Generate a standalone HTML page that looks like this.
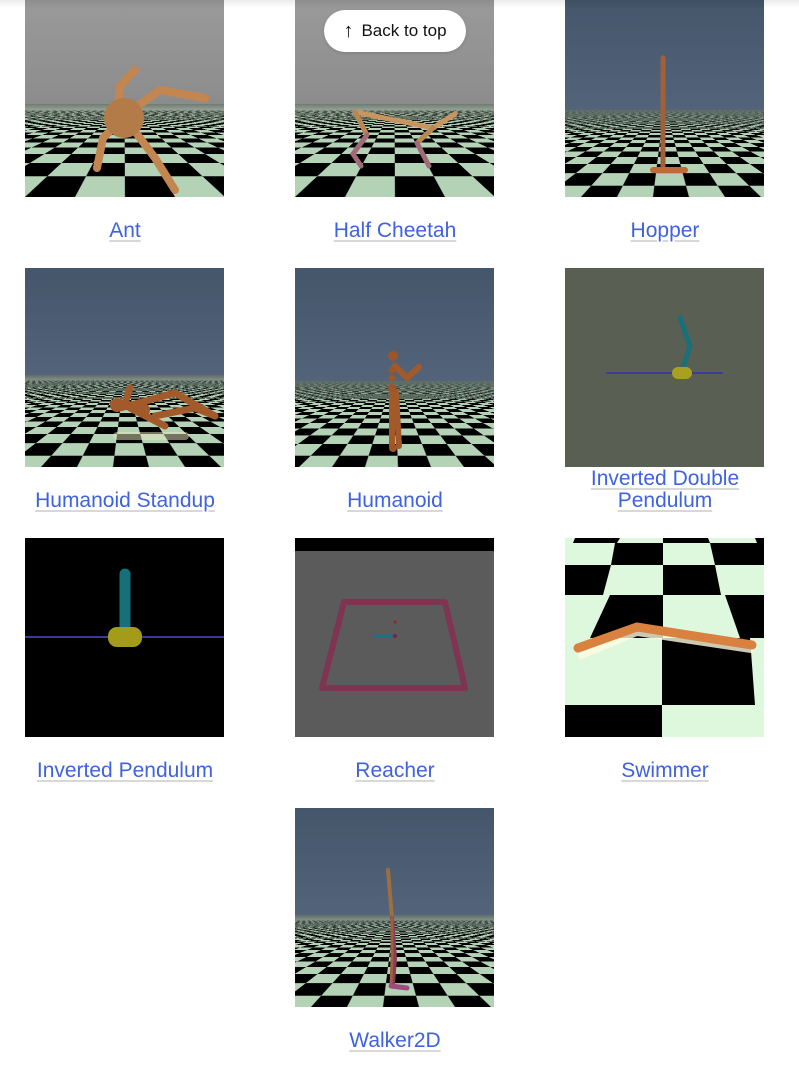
<!DOCTYPE html>
<html><head><meta charset="utf-8">
<style>
html,body{margin:0;padding:0;background:#fff;width:799px;height:1069px;overflow:hidden;position:relative;font-family:"Liberation Sans",sans-serif}
.sc{position:absolute;width:199px;height:199px;overflow:hidden}
.sky{position:absolute;left:0;top:0;width:199px}
.floor{position:absolute;left:0;width:199px;overflow:hidden;perspective:150px}
.plane{position:absolute;left:-2900px;width:6000px;height:2400px;bottom:0;transform-origin:50% 100%;transform:rotateX(60deg)}
.fog{position:absolute;left:0;width:199px}
.sc svg{position:absolute;left:0;top:0}
.lab{position:absolute;width:270px;height:44px;display:flex;align-items:center;justify-content:center;text-align:center;font-size:21px;line-height:22px;color:#3e62e0}
.lab span{text-decoration:underline;text-decoration-color:#d8d8d8;text-decoration-thickness:2px;text-underline-offset:3px}
.btt{position:absolute;left:324px;top:10px;width:142px;height:42px;border-radius:21px;background:#fff;font-size:17px;color:#111;display:flex;align-items:center;justify-content:center;box-shadow:0 1px 3px rgba(0,0,0,.15)}
</style></head><body>

<!-- Ant -->
<div class="sc" style="left:25px;top:-2px">
 <div class="sky" style="height:106px;background:linear-gradient(#9a9a9a,#8c8c8c)"></div>
 <div class="floor" style="top:106px;height:93px;perspective-origin:50% 87px"><div class="plane" style="background:repeating-conic-gradient(#000 0 25%,#b4d2b6 0 50%) 0 0/100px 100px"></div></div>
 <div class="fog" style="top:106px;height:22px;background:linear-gradient(#6f7d70,rgba(111,125,112,0))"></div>
 <svg width="199" height="199" stroke-linecap="round" fill="none">
  <g stroke="#c38650" stroke-width="8">
   <path d="M93 108 L95 88 L110 72"/><path d="M107 112 L135 92 L180 100"/>
   <path d="M90 128 L78 140 L72 170"/><path d="M112 136 L130 160 L150 192"/>
  </g>
  <circle cx="99" cy="120" r="20" fill="#b27b47"/>
 </svg>
</div>
<div class="lab" style="left:-10px;top:209px"><span>Ant</span></div>

<!-- Half Cheetah -->
<div class="sc" style="left:295px;top:-2px">
 <div class="sky" style="height:106px;background:linear-gradient(#9a9a9a,#8c8c8c)"></div>
 <div class="floor" style="top:106px;height:93px;perspective-origin:50% 87px"><div class="plane" style="background:repeating-conic-gradient(#000 0 25%,#b4d2b6 0 50%) 0 0/100px 100px"></div></div>
 <div class="fog" style="top:106px;height:22px;background:linear-gradient(#6f7d70,rgba(111,125,112,0))"></div>
 <svg width="199" height="199" stroke-linecap="round" fill="none">
  <path d="M60 114 L138 130 L160 116" stroke="#c9955f" stroke-width="5"/>
  <path d="M60 114 L72 137" stroke="#b98752" stroke-width="5"/>
  <path d="M72 137 L58 156 L66 168" stroke="#a06a78" stroke-width="5"/>
  <path d="M138 130 L122 145" stroke="#b98752" stroke-width="5"/>
  <path d="M122 145 L134 168" stroke="#a06a78" stroke-width="5"/>
 </svg>
</div>
<div class="lab" style="left:260px;top:209px"><span>Half Cheetah</span></div>

<!-- Hopper -->
<div class="sc" style="left:565px;top:-2px">
 <div class="sky" style="height:112px;background:linear-gradient(#45566b,#53637a)"></div>
 <div class="floor" style="top:112px;height:87px;perspective-origin:50% 81px"><div class="plane" style="background:repeating-conic-gradient(#000 0 25%,#b4d2b6 0 50%) 0 0/72px 72px"></div></div>
 <div class="fog" style="top:112px;height:22px;background:linear-gradient(#5e6e66,rgba(94,110,102,0))"></div>
 <svg width="199" height="199" stroke-linecap="round" fill="none">
  <path d="M98 60 L98 168" stroke="#a2603a" stroke-width="5"/>
  <path d="M88 172 L120 172" stroke="#c06a38" stroke-width="6"/>
 </svg>
</div>
<div class="lab" style="left:530px;top:209px"><span>Hopper</span></div>

<!-- Humanoid Standup -->
<div class="sc" style="left:25px;top:268px">
 <div class="sky" style="height:107px;background:linear-gradient(#45566b,#53637a)"></div>
 <div class="floor" style="top:107px;height:92px;perspective-origin:50% 86px"><div class="plane" style="background:repeating-conic-gradient(#000 0 25%,#b4d2b6 0 50%) 0 0/72px 72px"></div></div>
 <div class="fog" style="top:107px;height:22px;background:linear-gradient(#5e6e66,rgba(94,110,102,0))"></div>
 <svg width="199" height="199" stroke-linecap="round" fill="none">
  <g stroke="#a35a2a" stroke-width="7">
   <path d="M95 140 L150 125 L190 148"/><path d="M130 148 L170 140 L190 148"/>
   <path d="M105 140 L140 158"/><path d="M100 135 L105 120"/>
  </g>
  <circle cx="92" cy="137" r="7" fill="#a35a2a"/><circle cx="118" cy="142" r="7" fill="#a35a2a"/>
  <path d="M92 168 L160 168" stroke="#e8e6c0" stroke-width="8" opacity=".5"/>
 </svg>
</div>
<div class="lab" style="left:-10px;top:479px"><span>Humanoid Standup</span></div>

<!-- Humanoid -->
<div class="sc" style="left:295px;top:268px">
 <div class="sky" style="height:113px;background:linear-gradient(#45566b,#53637a)"></div>
 <div class="floor" style="top:113px;height:86px;perspective-origin:50% 80px"><div class="plane" style="background:repeating-conic-gradient(#000 0 25%,#b4d2b6 0 50%) 0 0/66px 66px"></div></div>
 <div class="fog" style="top:113px;height:22px;background:linear-gradient(#5e6e66,rgba(94,110,102,0))"></div>
 <svg width="199" height="199" stroke-linecap="round" fill="none">
  <g stroke="#a35a2a" stroke-width="6">
   <path d="M97 122 L97 178"/><path d="M101 124 L104 178"/>
   <path d="M100 98 L112 110 L124 99"/>
  </g>
  <g fill="#9e5628"><circle cx="98" cy="88" r="5"/><circle cx="97" cy="102" r="3.5"/><circle cx="97" cy="110" r="3.5"/><circle cx="97" cy="120" r="4"/><circle cx="98" cy="180" r="4"/></g>
 </svg>
</div>
<div class="lab" style="left:260px;top:479px"><span>Humanoid</span></div>

<!-- Inverted Double Pendulum -->
<div class="sc" style="left:565px;top:268px;background:#595f53">
 <svg width="199" height="199" stroke-linecap="round" fill="none">
  <path d="M42 105 L157 105" stroke="#3e3aa0" stroke-width="2"/>
  <path d="M117 103 L125 78 L115 50" stroke="#17707a" stroke-width="5"/>
  <rect x="107" y="99" width="20" height="12" rx="6" fill="#a8a020"/>
 </svg>
</div>
<div class="lab" style="left:530px;top:468px"><span>Inverted Double<br>Pendulum</span></div>

<!-- Inverted Pendulum -->
<div class="sc" style="left:25px;top:538px;background:#000">
 <svg width="199" height="199" stroke-linecap="round" fill="none">
  <path d="M0 99 L199 99" stroke="#3a3a9a" stroke-width="2"/>
  <path d="M100 92 L100 36" stroke="#16707a" stroke-width="11"/>
  <rect x="83" y="89" width="34" height="20" rx="9" fill="#a49c18"/>
 </svg>
</div>
<div class="lab" style="left:-10px;top:749px"><span>Inverted Pendulum</span></div>

<!-- Reacher -->
<div class="sc" style="left:295px;top:538px;background:#5b5b5b">
 <div style="position:absolute;left:0;top:0;width:199px;height:13px;background:#000"></div>
 <svg width="199" height="199" stroke-linecap="round" stroke-linejoin="round" fill="none">
  <path d="M49 64 L150 64 L170 150 L27 150 Z" stroke="#7f3452" stroke-width="6"/>
  <path d="M80 98 L100 98" stroke="#1d6f88" stroke-width="3"/>
  <circle cx="100" cy="98" r="2.2" fill="#7a2840"/>
  <circle cx="100" cy="84" r="1.6" fill="#8a2a2a"/>
 </svg>
</div>
<div class="lab" style="left:260px;top:749px"><span>Reacher</span></div>

<!-- Swimmer -->
<div class="sc" style="left:565px;top:538px;background:#def8de">
 <svg width="199" height="199" stroke-linecap="round" fill="none">
  <g fill="#000">
   <polygon points="10,0 55,0 52,5 8,5"/><polygon points="98,0 143,0 145,5 98,5"/><polygon points="190,0 199,0 199,5 192,5"/>
   <polygon points="50,5 98,5 98,27 46,27"/><polygon points="145,5 199,5 199,27 150,27"/>
   <polygon points="0,27 46,27 38,57 0,57"/><polygon points="98,27 150,27 156,57 98,57"/>
   <polygon points="45,57 98,57 98,100 25,100"/><polygon points="160,57 199,57 199,100 175,100"/>
   <polygon points="97,100 185,100 190,167 97,167"/>
   <polygon points="0,167 97,167 97,199 0,199"/>
  </g>
  <path d="M16 118 L72 95 L186 112" stroke="#fffbe0" stroke-width="6" opacity=".8"/>
  <path d="M13 110 L72 89 L187 107" stroke="#d9823f" stroke-width="9"/>
 </svg>
</div>
<div class="lab" style="left:530px;top:749px"><span>Swimmer</span></div>

<!-- Walker2D -->
<div class="sc" style="left:295px;top:808px">
 <div class="sky" style="height:107px;background:linear-gradient(#45566b,#53637a)"></div>
 <div class="floor" style="top:107px;height:92px;perspective-origin:50% 86px"><div class="plane" style="background:repeating-conic-gradient(#000 0 25%,#b4d2b6 0 50%) 0 0/72px 72px"></div></div>
 <div class="fog" style="top:107px;height:22px;background:linear-gradient(#5e6e66,rgba(94,110,102,0))"></div>
 <svg width="199" height="199" stroke-linecap="round" fill="none">
  <path d="M93 62 L97 110" stroke="#9a7040" stroke-width="4"/>
  <path d="M97 110 L100 150 L98 176" stroke="#8a3a5a" stroke-width="4"/>
  <path d="M97 110 L97 150 L96 176" stroke="#9a6040" stroke-width="3"/>
  <path d="M96 178 L112 180" stroke="#a04a80" stroke-width="5"/>
 </svg>
</div>
<div class="lab" style="left:260px;top:1019px"><span>Walker2D</span></div>

<div style="position:absolute;left:0;top:0;width:799px;height:8px;background:linear-gradient(rgba(0,0,0,.08),rgba(0,0,0,0))"></div>
<div class="btt"><span style="font-size:20px;font-weight:bold;margin-right:8px">&#8593;</span>Back to top</div>
</body></html>
